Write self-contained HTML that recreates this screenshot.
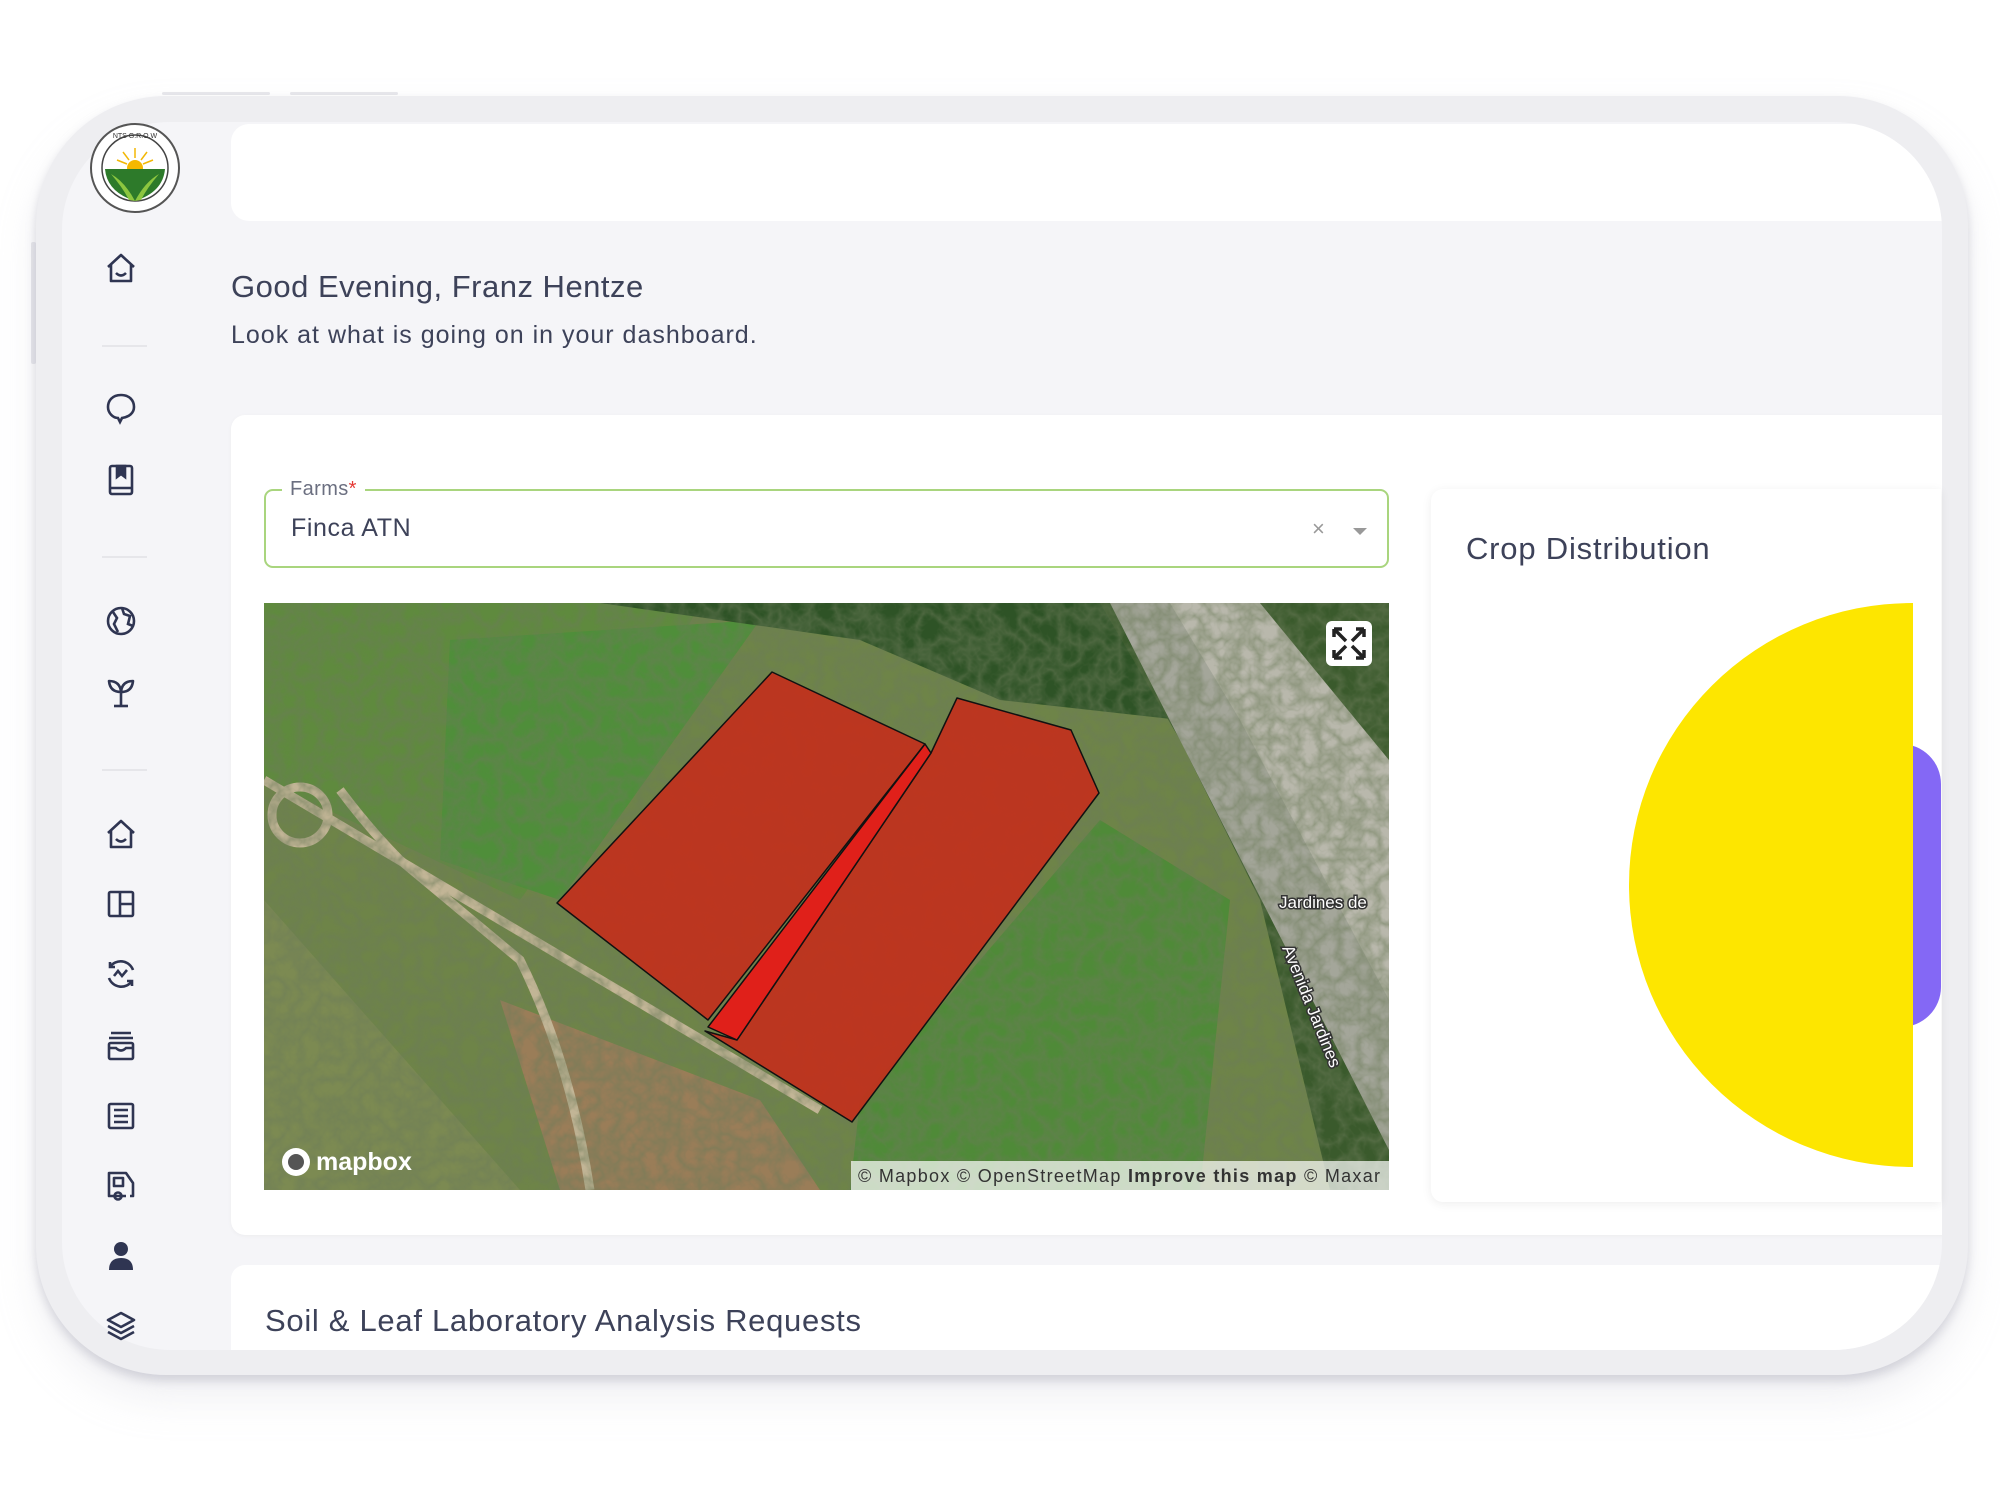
<!DOCTYPE html>
<html><head><meta charset="utf-8"><style>
*{margin:0;padding:0;box-sizing:border-box}
body{width:2000px;height:1500px;background:#fff;position:relative;overflow:hidden;font-family:"Liberation Sans",sans-serif;color:#3d4259}
.abs{position:absolute}
.frame{left:36px;top:96px;width:1932px;height:1279px;border-radius:130px;background:#eeeef1;box-shadow:0 6px 10px rgba(150,150,165,.35),0 24px 40px rgba(200,200,210,.25)}
.screen{left:62px;top:122px;width:1880px;height:1228px;border-radius:108px 108px 108px 108px;background:#f5f5f8;overflow:hidden}
.card{background:#fff;border-radius:14px}
.ic{position:absolute;left:104px;width:34px;height:34px}
.div{position:absolute;left:102px;width:45px;height:2px;background:#e6e6ea}
</style></head><body>
<div class="abs" style="left:162px;top:92px;width:108px;height:3px;background:#e8e8ec;border-radius:2px"></div>
<div class="abs" style="left:290px;top:92px;width:108px;height:3px;background:#e8e8ec;border-radius:2px"></div>
<div class="abs" style="left:31px;top:242px;width:5px;height:122px;background:#e8e8ec;border-radius:2px"></div>
<div class="abs frame"></div>
<div class="abs screen">
 <div class="abs card" style="left:169px;top:2px;width:1790px;height:97px;border-radius:18px 0 0 18px"></div>
 <div class="abs card" style="left:169px;top:293px;width:1790px;height:820px;border-radius:14px;box-shadow:0 1px 4px rgba(0,0,0,.04)"></div>
 <div class="abs card" style="left:169px;top:1143px;width:1790px;height:200px"></div>
</div>
<!-- logo -->
<svg class="abs" style="left:89px;top:122px" width="92" height="92" viewBox="0 0 92 92">
<circle cx="46" cy="46" r="44" fill="#fff" stroke="#555" stroke-width="2"/>
<circle cx="46" cy="46" r="33" fill="#fff" stroke="#444" stroke-width="1.5"/>
<g stroke="#f2b705" stroke-width="1.5"><line x1="46" y1="26" x2="46" y2="36"/><line x1="34" y1="30" x2="40" y2="38"/><line x1="58" y1="30" x2="52" y2="38"/><line x1="28" y1="38" x2="38" y2="42"/><line x1="64" y1="38" x2="54" y2="42"/></g>
<circle cx="46" cy="46" r="8" fill="#f5b800"/>
<path d="M16 47 H76 Q74 70 46 79 Q18 70 16 47Z" fill="#2d7a2a"/>
<path d="M46 79 Q36 60 22 52 Q34 66 40 78Z M46 79 Q56 60 70 52 Q58 66 52 78Z" fill="#8cc63f"/>
<text x="46" y="16" font-size="7" text-anchor="middle" fill="#333">NTS G.R.O.W</text>
</svg>
<!-- sidebar icons -->
<svg class="ic" style="top:251px" viewBox="0 0 34 34" fill="none" stroke="#2f3552" stroke-width="2.6" stroke-linejoin="round"><path d="M4 16 L17 4 L30 16 M7 13 V30 H27 V13"/><path d="M12 22 Q17 27 22 22"/></svg>
<div class="div" style="top:345px"></div>
<svg class="ic" style="top:391px" viewBox="0 0 34 34" fill="none" stroke="#2f3552" stroke-width="2.6"><path d="M17 4 C8 4 4 10 4 16 C4 22 9 27 14 27 L16 31 L18 27 C25 26 30 22 30 16 C30 9 25 4 17 4Z"/></svg>
<svg class="ic" style="top:463px" viewBox="0 0 34 34" fill="none" stroke="#2f3552" stroke-width="2.6"><rect x="6" y="3" width="22" height="28" rx="2"/><path d="M6 25 H28"/><path d="M13 3 V14 L17 11 L21 14 V3Z" fill="#2f3552"/></svg>
<div class="div" style="top:556px"></div>
<svg class="ic" style="top:604px" viewBox="0 0 34 34" fill="none" stroke="#2f3552" stroke-width="2.6"><circle cx="17" cy="17" r="13"/><path d="M9 8 L13 14 L10 20 L14 28 M18 4 L20 10 L26 12 L24 20 L29 22" /></svg>
<svg class="ic" style="top:676px" viewBox="0 0 34 34" fill="none" stroke="#2f3552" stroke-width="2.6" stroke-linejoin="round"><path d="M17 31 V16 M17 16 Q6 16 5 5 Q16 5 17 16 M17 16 Q28 16 29 5 Q18 5 17 16"/><path d="M10 30 H24"/></svg>
<div class="div" style="top:769px"></div>
<svg class="ic" style="top:817px" viewBox="0 0 34 34" fill="none" stroke="#2f3552" stroke-width="2.6" stroke-linejoin="round"><path d="M4 16 L17 4 L30 16 M7 13 V30 H27 V13"/><path d="M12 22 Q17 27 22 22"/></svg>
<svg class="ic" style="top:887px" viewBox="0 0 34 34" fill="none" stroke="#2f3552" stroke-width="2.6"><rect x="5" y="5" width="24" height="24" rx="1.5"/><path d="M16 5 V29 M16 17 H29"/></svg>
<svg class="ic" style="top:957px" viewBox="0 0 34 34" fill="none" stroke="#2f3552" stroke-width="2.6"><path d="M6 10 A13 13 0 0 1 29 13 M28 24 A13 13 0 0 1 5 21"/><path d="M10 19 L14 14 L18 19 L23 13"/><path d="M6 5 V10 H11 M28 29 V24 H23"/></svg>
<svg class="ic" style="top:1029px" viewBox="0 0 34 34" fill="none" stroke="#2f3552" stroke-width="2.6"><path d="M7 4 H27 M5 9 H29"/><rect x="5" y="14" width="24" height="16" rx="1.5"/><path d="M5 19 H12 Q17 24 22 19 H29"/></svg>
<svg class="ic" style="top:1099px" viewBox="0 0 34 34" fill="none" stroke="#2f3552" stroke-width="2.6"><rect x="5" y="5" width="24" height="24" rx="1.5"/><path d="M10 11 H24 M10 17 H24 M10 23 H24"/></svg>
<svg class="ic" style="top:1169px" viewBox="0 0 34 34" fill="none" stroke="#2f3552" stroke-width="2.6" stroke-linejoin="round"><path d="M22 27 H5 V4 H22 L29 14 V27 H26"/><rect x="10" y="9" width="9" height="8"/><circle cx="14" cy="27" r="3.5"/></svg>
<svg class="ic" style="top:1239px" viewBox="0 0 34 34" fill="#2f3552"><circle cx="17" cy="10" r="7"/><path d="M5 31 Q5 19 17 19 Q29 19 29 31Z"/></svg>
<svg class="ic" style="top:1310px" viewBox="0 0 34 34" fill="none" stroke="#2f3552" stroke-width="2.6" stroke-linejoin="round"><path d="M17 3 L30 10 L17 17 L4 10Z M4 16 L17 23 L30 16 M4 22 L17 29 L30 22"/></svg>
<!-- text -->
<div class="abs" style="left:231px;top:269px;font-size:31px;letter-spacing:0.5px;color:#3d4259">Good Evening, Franz Hentze</div>
<div class="abs" style="left:231px;top:321px;font-size:25px;letter-spacing:1px;color:#3d4259">Look at what is going on in your dashboard.</div>
<!-- farms input -->
<div class="abs" style="left:264px;top:489px;width:1125px;height:79px;border:2px solid #a9d57e;border-radius:9px"></div>
<div class="abs" style="left:282px;top:478px;padding:0 8px;background:#fff;font-size:20px;letter-spacing:0.4px;color:#6b6f80">Farms<span style="color:#e53935">*</span></div>
<div class="abs" style="left:291px;top:514px;font-size:25px;letter-spacing:0.6px;color:#3d4259">Finca ATN</div>
<div class="abs" style="left:1312px;top:516px;font-size:22px;color:#999">×</div>
<div class="abs" style="left:1353px;top:528px;width:0;height:0;border-left:7px solid transparent;border-right:7px solid transparent;border-top:7px solid #999"></div>
<!-- map -->
<svg class="abs" style="left:264px;top:603px" width="1125" height="587" viewBox="264 603 1125 587">
<defs><filter id="n"><feTurbulence baseFrequency="0.05" numOctaves="3" seed="3"/><feColorMatrix values="0 0 0 0 0.15  0 0 0 0 0.2  0 0 0 0 0.1  0 0 0 -1.6 0.9"/></filter></defs>
<rect x="264" y="603" width="1125" height="587" fill="#6e8448"/>
<path d="M264 603 H700 L620 760 L520 900 L264 780Z" fill="#5f8a3e"/>
<path d="M450 640 L760 620 L560 900 L440 860Z" fill="#4f8e3a"/>
<path d="M600 603 H1150 L1180 720 L1000 700 L860 640 Z" fill="#2e5326"/>
<path d="M1100 603 H1389 V1190 H1330 L1260 900 L1180 740Z" fill="#3a5a2c"/>
<path d="M1110 603 H1180 L1389 880 V1150 Z" fill="#a4a69a"/>
<path d="M1170 603 H1260 L1389 760 V1000 L1240 720Z" fill="#b9b8ac"/>
<path d="M264 900 L520 1190 H264Z" fill="#7c8a52"/>
<path d="M500 1000 L760 1100 L820 1190 H560Z" fill="#9a7d58"/>
<path d="M860 1100 L1100 820 L1230 900 L1200 1190 H850Z" fill="#4f8a38"/>
<path d="M264 780 L820 1110 M340 790 Q370 830 400 860 L520 960 Q570 1060 590 1190" stroke="#c2b596" stroke-width="9" fill="none"/>
<circle cx="300" cy="815" r="28" fill="none" stroke="#c2b596" stroke-width="9"/>
<rect x="264" y="603" width="1125" height="587" filter="url(#n)" opacity=".6"/>
<g stroke="#111" stroke-width="1.5" stroke-linejoin="round">
<path d="M772 672 L925 744 L708 1020 L557 903Z" fill="#c2301c" fill-opacity=".92"/>
<path d="M957 698 L1071 730 L1099 793 L852 1122 L705 1031 L737 1040 L931 753Z" fill="#c2301c" fill-opacity=".92"/>
<path d="M925 744 L931 753 L737 1040 L708 1027Z" fill="#e0201a"/>
</g>
<rect x="1326" y="621" width="46" height="45" rx="6" fill="#fff"/>
<path d="M1334 629 L1346 641 M1334 629 V637 M1334 629 H1342 M1364 629 L1352 641 M1364 629 V637 M1364 629 H1356 M1334 658 L1346 646 M1334 658 V650 M1334 658 H1342 M1364 658 L1352 646 M1364 658 V650 M1364 658 H1356" stroke="#222" stroke-width="3.5"/>
<text x="1279" y="908" font-size="17" fill="#fff" stroke="#333" stroke-width="3" paint-order="stroke" font-family="Liberation Sans">Jardines de</text>
<text transform="translate(1282,948) rotate(68)" font-size="17" fill="#fff" stroke="#333" stroke-width="3" paint-order="stroke" font-family="Liberation Sans">Avenida Jardines</text>
<circle cx="296" cy="1162" r="14" fill="#fff"/><circle cx="296" cy="1162" r="8" fill="#555"/>
<text x="316" y="1170" font-size="25" font-weight="bold" fill="#fff" font-family="Liberation Sans">mapbox</text>
<rect x="851" y="1161" width="538" height="29" fill="#fff" fill-opacity=".7"/>
<text x="858" y="1182" font-size="18" fill="#333" font-family="Liberation Sans" textLength="522">© Mapbox © OpenStreetMap <tspan font-weight="bold">Improve this map</tspan> © Maxar</text>
</svg>
<!-- crop distribution -->
<div class="abs" style="left:1431px;top:489px;width:510px;height:713px;background:#fff;border-radius:12px 0 0 12px;box-shadow:0 2px 10px rgba(0,0,0,.07);overflow:hidden">
 <div class="abs" style="left:35px;top:42px;font-size:31px;letter-spacing:0.8px;color:#3d4259">Crop Distribution</div>
 <div class="abs" style="left:452px;top:255px;width:58px;height:283px;background:#8468f5;border-radius:0 40px 40px 0"></div>
 <div class="abs" style="left:198px;top:114px;width:566px;height:564px;border-radius:50%;background:#fde600;clip-path:inset(0 282px 0 0)"></div>
</div>
<div class="abs" style="left:265px;top:1303px;font-size:31px;letter-spacing:0.7px;color:#3d4259">Soil &amp; Leaf Laboratory Analysis Requests</div>
</body></html>
